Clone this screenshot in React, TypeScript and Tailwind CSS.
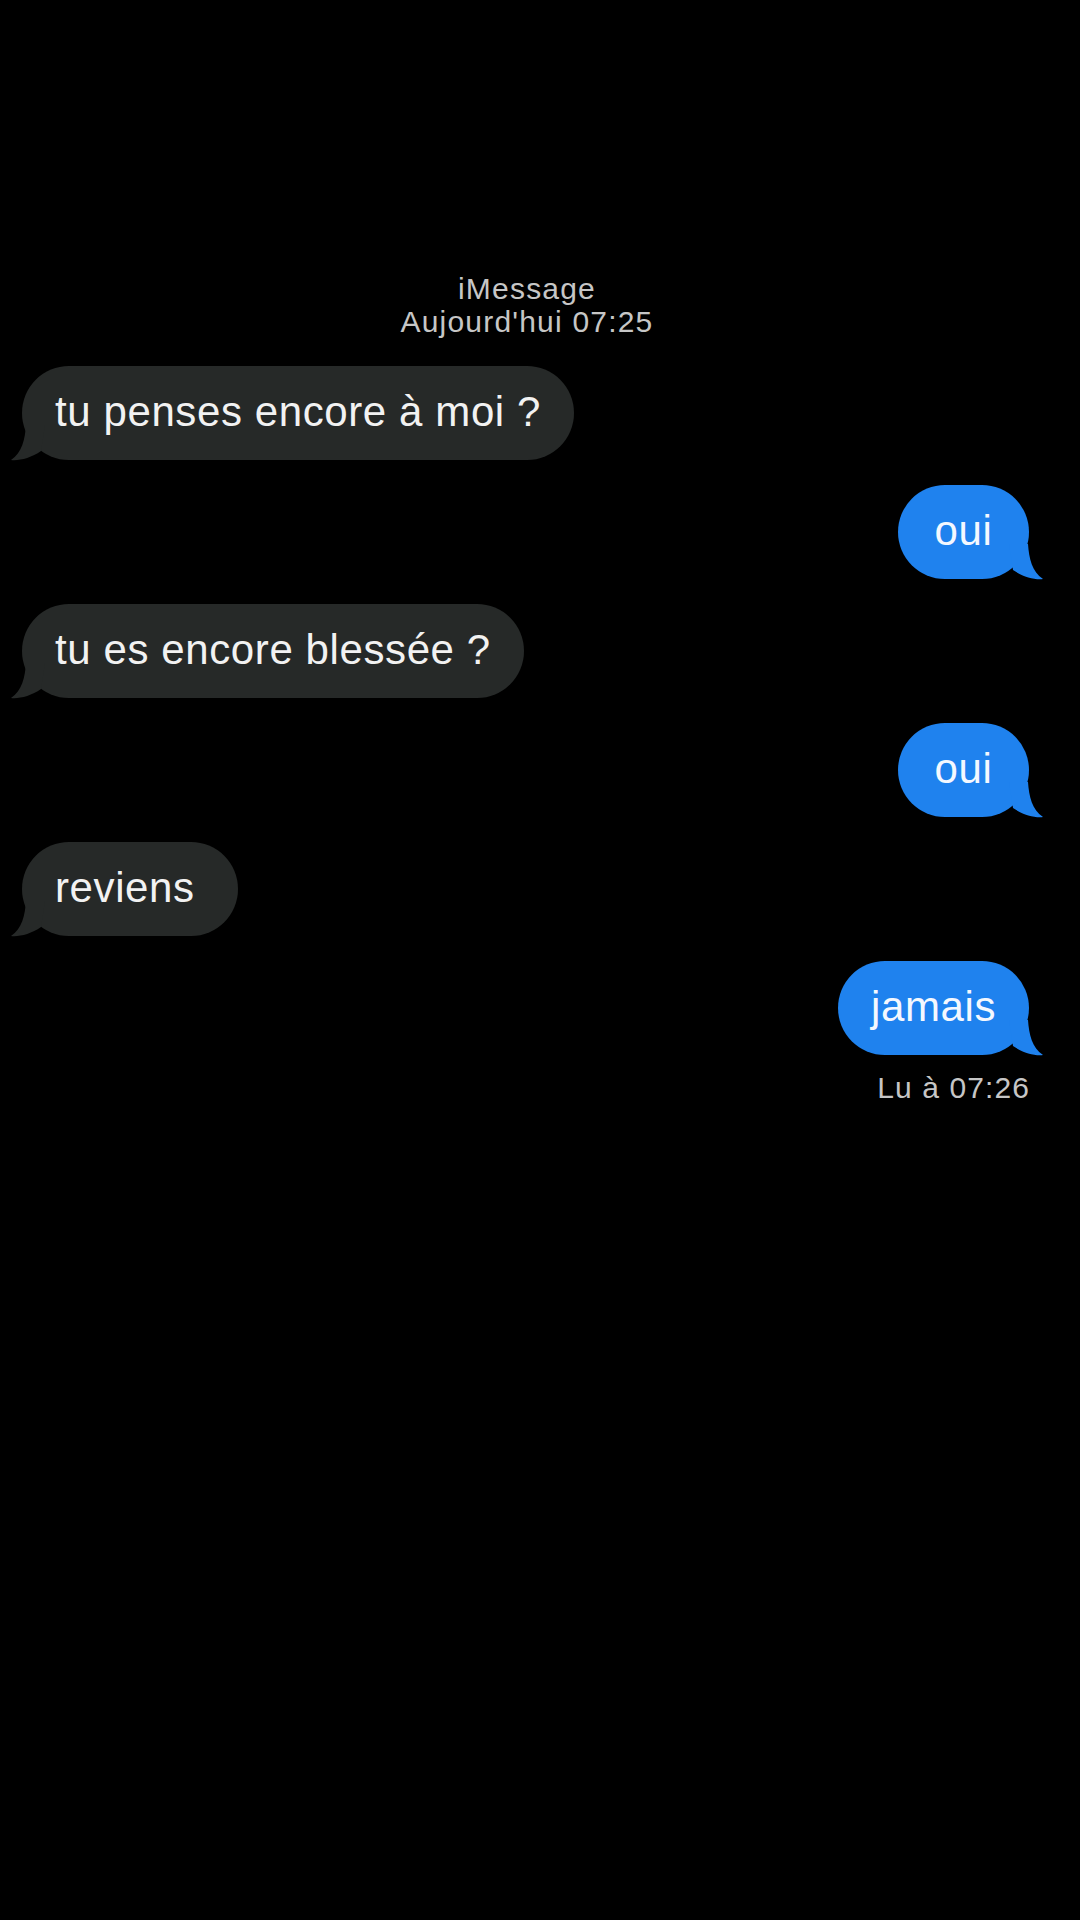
import React from 'react';

type Side = 'in' | 'out';

interface Message {
  id: number;
  side: Side;
  text: string;
}

const messages: Message[] = [
  { id: 1, side: 'in', text: 'tu penses encore à moi ?' },
  { id: 2, side: 'out', text: 'oui' },
  { id: 3, side: 'in', text: 'tu es encore blessée ?' },
  { id: 4, side: 'out', text: 'oui' },
  { id: 5, side: 'in', text: 'reviens' },
  { id: 6, side: 'out', text: 'jamais' },
];

const Tail: React.FC<{ side: Side }> = ({ side }) => {
  const isOut = side === 'out';
  return (
    <svg
      viewBox="0 0 34 36"
      width={34}
      height={36}
      className={
        isOut
          ? 'absolute -right-[14px] bottom-[-1px]'
          : 'absolute -left-[11px] bottom-[-1px] -scale-x-100'
      }
      aria-hidden="true"
    >
      <path
        d="M0 0 H19 C20 14 23 28 34 35 C26 36 14 33 4 26 Z"
        fill={isOut ? '#1f82ee' : '#262928'}
      />
    </svg>
  );
};

const Bubble: React.FC<{ message: Message }> = ({ message }) => {
  const isOut = message.side === 'out';
  return (
    <div className={`flex ${isOut ? 'justify-end pr-[51px]' : 'justify-start pl-[22px]'}`}>
      <div
        className={`relative flex h-[94px] items-center rounded-full px-[33px] text-[42px] leading-none tracking-[0.6px] ${
          isOut
            ? 'min-w-[131px] justify-center bg-[#1f82ee] text-[#f4f8ff]'
            : 'min-w-[216px] justify-start bg-[#262928] text-[#f2f2f2]'
        }`}
      >
        <Tail side={message.side} />
        <span className="relative pb-[3px]">{message.text}</span>
      </div>
    </div>
  );
};

const App: React.FC = () => {
  return (
    <div
      className="min-h-[1920px] w-full bg-black pt-[272px]"
      style={{ fontFamily: '"Liberation Sans", Arial, sans-serif' }}
    >
      <div className="flex flex-col items-center pr-[26px] text-[30px] leading-[33px] tracking-[1.2px] text-[#c6c6c6]">
        <span>iMessage</span>
        <span>Aujourd'hui 07:25</span>
      </div>

      <div className="mt-[28px] flex flex-col gap-[25px]">
        {messages.map((m) => (
          <Bubble key={m.id} message={m} />
        ))}
      </div>

      <div className="mt-[16px] flex justify-end pr-[50px] text-[30px] leading-[33px] tracking-[1.1px] text-[#c6c6c6]">
        Lu à 07:26
      </div>
    </div>
  );
};

export default App;
